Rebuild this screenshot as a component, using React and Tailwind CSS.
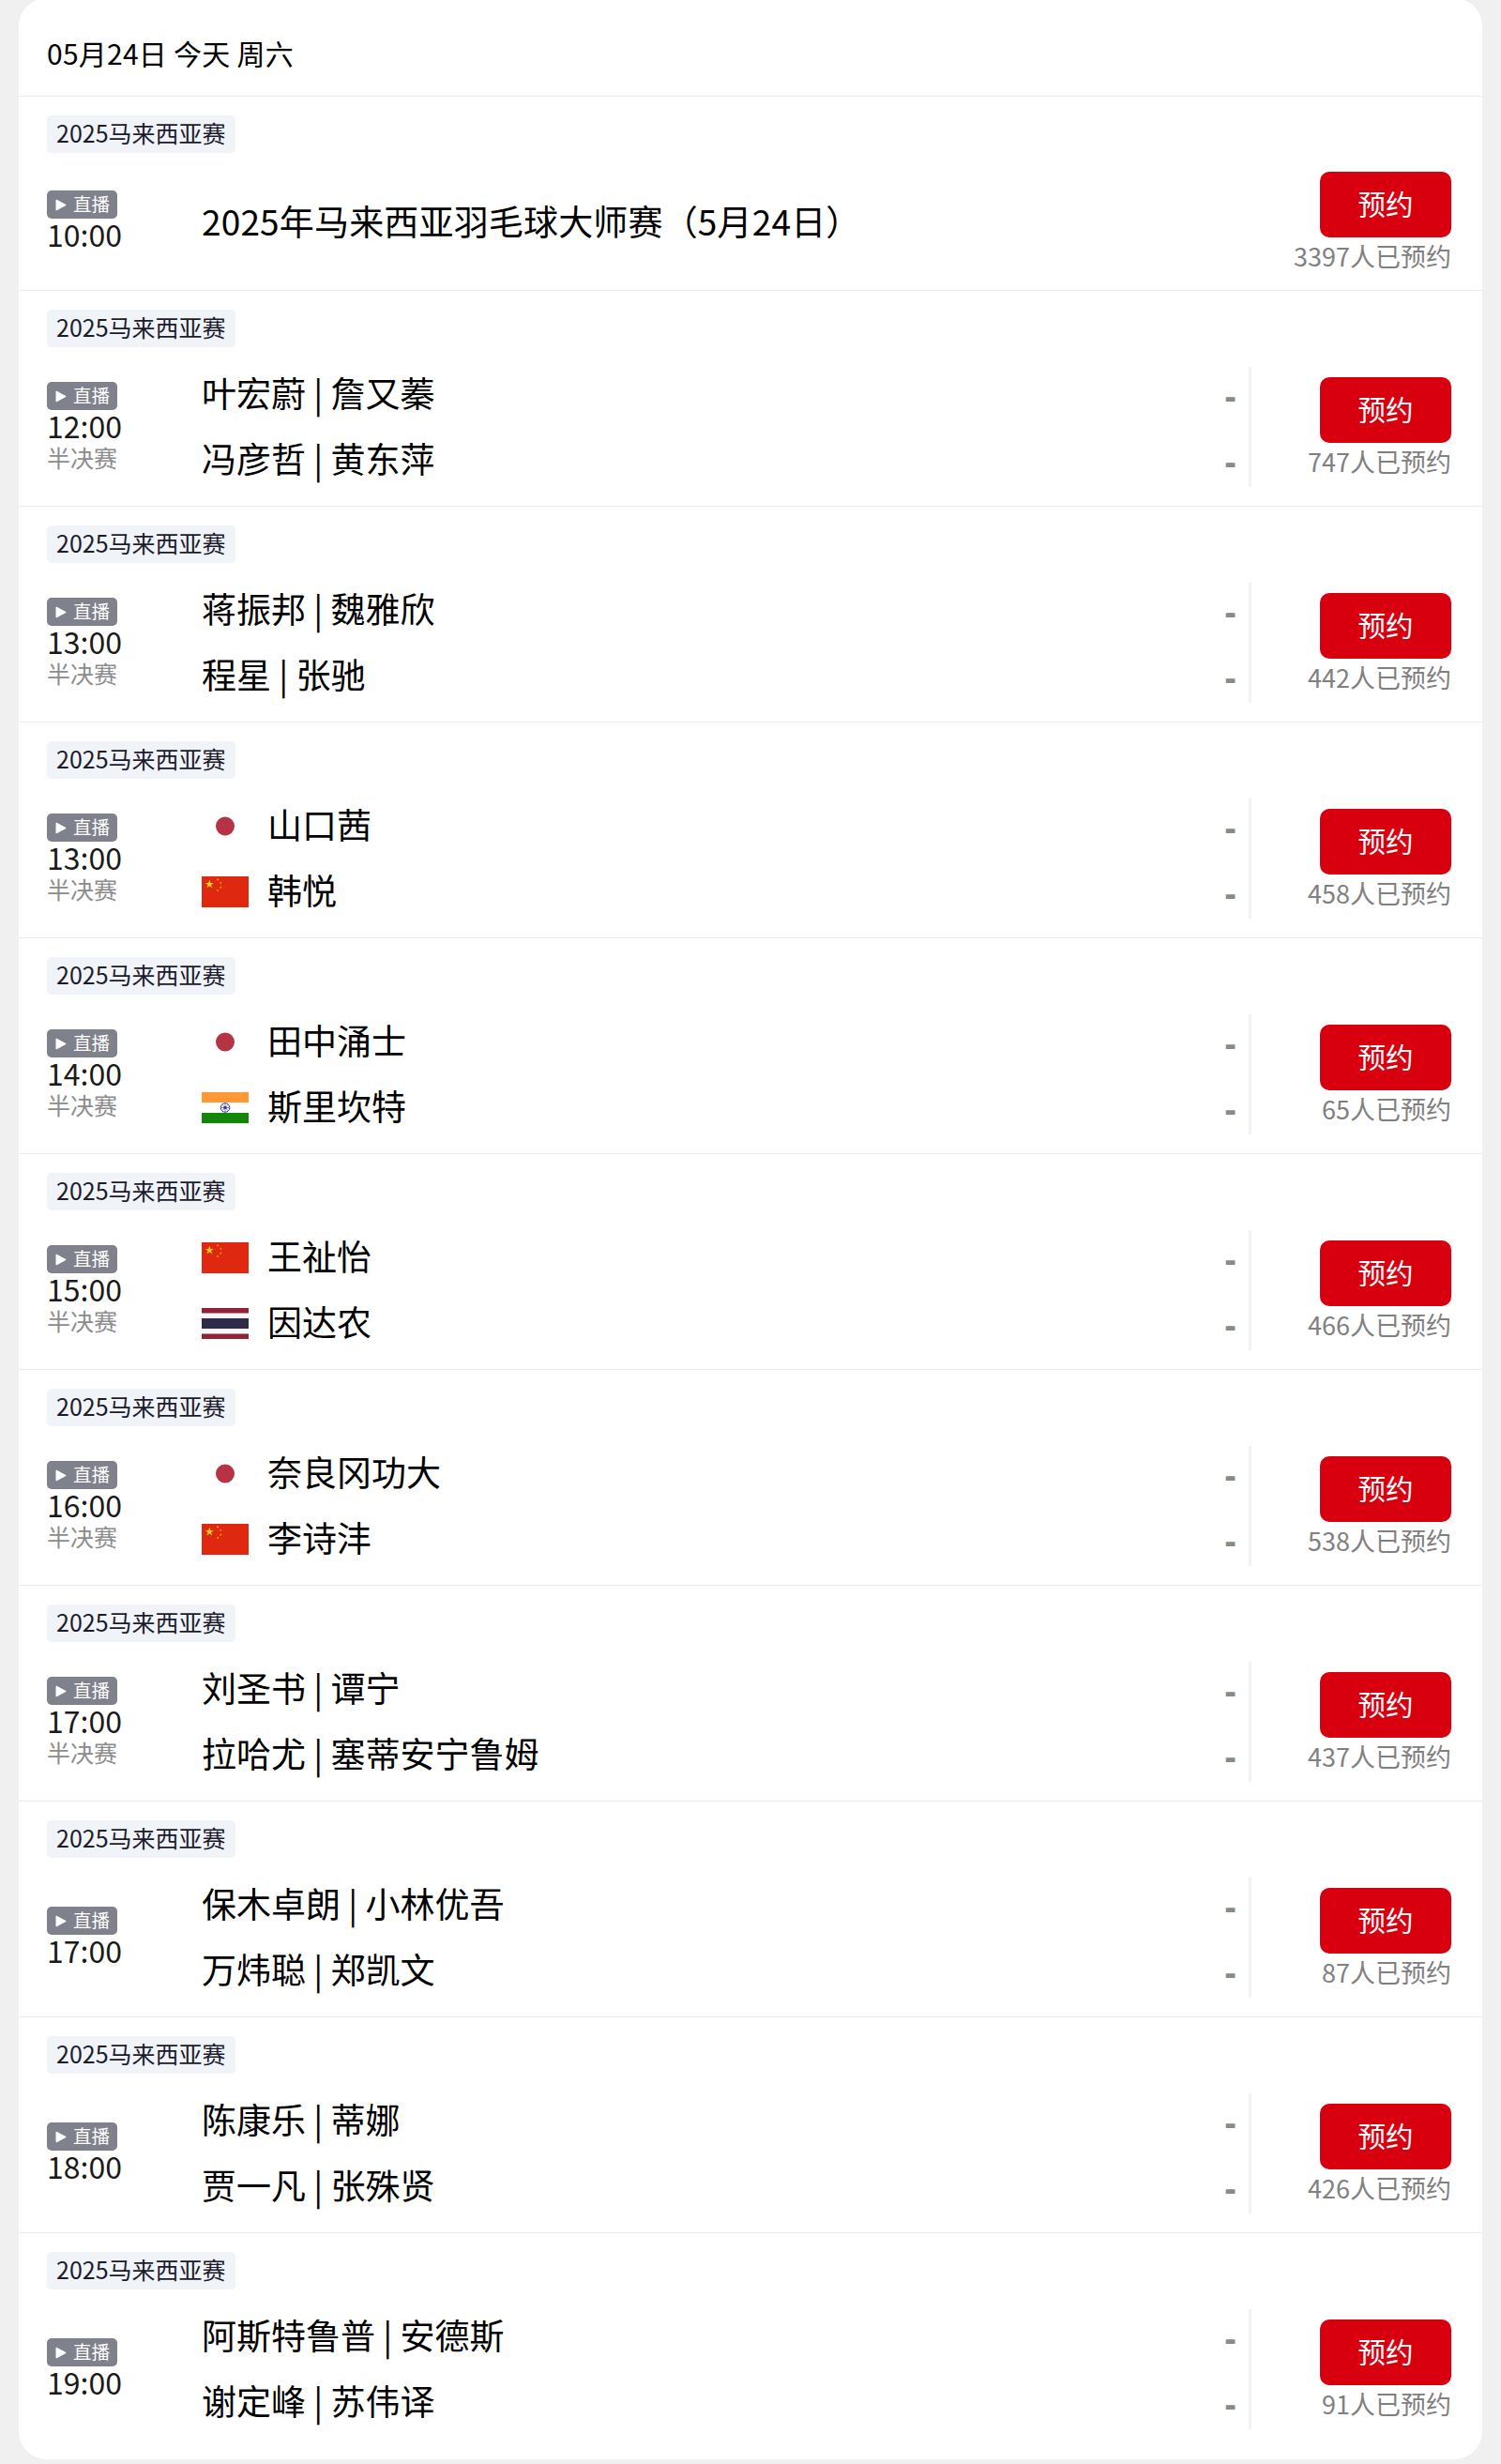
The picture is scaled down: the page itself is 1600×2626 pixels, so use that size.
import React from "react";

const TAG = "2025马来西亚赛";

const matches = [
  {
    time: "10:00",
    title: "2025年马来西亚羽毛球大师赛（5月24日）",
    booked: 3397,
  },
  {
    time: "12:00",
    stage: "半决赛",
    teams: [{ name: "叶宏蔚 | 詹又蓁" }, { name: "冯彦哲 | 黄东萍" }],
    booked: 747,
  },
  {
    time: "13:00",
    stage: "半决赛",
    teams: [{ name: "蒋振邦 | 魏雅欣" }, { name: "程星 | 张驰" }],
    booked: 442,
  },
  {
    time: "13:00",
    stage: "半决赛",
    teams: [
      { name: "山口茜", flag: "jp" },
      { name: "韩悦", flag: "cn" },
    ],
    booked: 458,
  },
  {
    time: "14:00",
    stage: "半决赛",
    teams: [
      { name: "田中涌士", flag: "jp" },
      { name: "斯里坎特", flag: "in" },
    ],
    booked: 65,
  },
  {
    time: "15:00",
    stage: "半决赛",
    teams: [
      { name: "王祉怡", flag: "cn" },
      { name: "因达农", flag: "th" },
    ],
    booked: 466,
  },
  {
    time: "16:00",
    stage: "半决赛",
    teams: [
      { name: "奈良冈功大", flag: "jp" },
      { name: "李诗沣", flag: "cn" },
    ],
    booked: 538,
  },
  {
    time: "17:00",
    stage: "半决赛",
    teams: [{ name: "刘圣书 | 谭宁" }, { name: "拉哈尤 | 塞蒂安宁鲁姆" }],
    booked: 437,
  },
  {
    time: "17:00",
    teams: [{ name: "保木卓朗 | 小林优吾" }, { name: "万炜聪 | 郑凯文" }],
    booked: 87,
  },
  {
    time: "18:00",
    teams: [{ name: "陈康乐 | 蒂娜" }, { name: "贾一凡 | 张殊贤" }],
    booked: 426,
  },
  {
    time: "19:00",
    teams: [{ name: "阿斯特鲁普 | 安德斯" }, { name: "谢定峰 | 苏伟译" }],
    booked: 91,
  },
];

const STAR = "0,-1 0.225,-0.309 0.951,-0.309 0.363,0.118 0.588,0.809 0,0.382 -0.588,0.809 -0.363,0.118 -0.951,-0.309 -0.225,-0.309";

const Flag = ({ code }) => (
  <svg className="mr-5 h-[33px] w-[50px] shrink-0" viewBox="0 0 50 33">
    {code === "jp" && (
      <>
        <rect width="50" height="33" fill="#fff" />
        <circle cx="25" cy="16.5" r="10" fill="#b53344" />
      </>
    )}
    {code === "cn" && (
      <>
        <rect width="50" height="33" fill="#de2910" />
        <g fill="#ffd21f">
          <polygon points={STAR} transform="translate(8.3 8.5) scale(4.8)" />
          <g fillOpacity="0.85">
            <polygon points={STAR} transform="translate(17 3.4) rotate(23) scale(1.5)" />
            <polygon points={STAR} transform="translate(20.3 6.8) rotate(45) scale(1.5)" />
            <polygon points={STAR} transform="translate(20.3 11.6) scale(1.5)" />
            <polygon points={STAR} transform="translate(17 15) rotate(20) scale(1.5)" />
          </g>
        </g>
      </>
    )}
    {code === "in" && (
      <>
        <rect width="50" height="33" fill="#fff" />
        <rect width="50" height="11" fill="#ff9933" />
        <rect y="22" width="50" height="11" fill="#138808" />
        <circle cx="25" cy="16.5" r="4.8" fill="none" stroke="#3c3c94" strokeWidth="1" />
        <circle cx="25" cy="16.5" r="1.7" fill="#2a2a85" />
        <g stroke="#3c3c94" strokeWidth="0.6">
          <path d="M20.5 16.5h9M25 12v9M21.8 13.3l6.4 6.4M28.2 13.3l-6.4 6.4" />
        </g>
      </>
    )}
    {code === "th" && (
      <>
        <rect width="50" height="33" fill="#f4f5f8" />
        <rect width="50" height="5.5" fill="#8f2338" />
        <rect y="11" width="50" height="11" fill="#2d2a4a" />
        <rect y="27.5" width="50" height="5.5" fill="#8f2338" />
      </>
    )}
  </svg>
);

const LiveBadge = () => (
  <div className="flex h-[30px] w-[75px] items-center rounded-[5px] bg-[#7f818c] pl-[9px] text-white">
    <svg className="h-[13px] w-3" viewBox="0 0 12 13">
      <path
        d="M1 1v11L11.2 6.5z"
        fill="currentColor"
        stroke="currentColor"
        strokeWidth="1"
        strokeLinejoin="round"
      />
    </svg>
    <span className="ml-[7px] pb-0.5 text-[19.5px] leading-7">直播</span>
  </div>
);

const MatchRow = ({ match }) => (
  <div className="border-t border-[#ebebeb] pt-5 pr-[33px] pl-[30px]">
    <div className="h-10 w-[201px] rounded-[5px] bg-[#f0f3f8] px-2.5 text-[25px] leading-[37px] whitespace-nowrap text-[#1b1b2c]">
      {TAG}
    </div>
    <div
      className={
        match.teams
          ? "mt-5 mb-[19px] flex h-[130px] items-center"
          : "mt-5 mb-5 flex h-[106px] items-center"
      }
    >
      <div className="w-[165px] shrink-0">
        <LiveBadge />
        <div className="pb-[3px] text-[32px] leading-[33px] text-[#1a1a1a]">
          {match.time}
        </div>
        {match.stage && (
          <div className="pb-px text-[25px] leading-[29px] text-[#8c8c8c]">
            {match.stage}
          </div>
        )}
      </div>

      {match.title && (
        <div className="flex-1 pb-[3px] text-[37px] leading-[60px] tracking-[0.17px]">
          {match.title}
        </div>
      )}

      {match.teams && (
        <div className="flex flex-1 flex-col gap-2.5">
          {match.teams.map((team) => (
            <div key={team.name} className="flex h-[60px] items-center">
              {team.flag && <Flag code={team.flag} />}
              <span className="flex-1 pb-[3px] text-[37px] leading-[57px]">
                {team.name}
              </span>
              <span className="mr-[13px] pt-1.5 font-['Liberation_Sans',sans-serif] text-[38px] leading-[54px] font-bold text-[#8a8a8a]">
                -
              </span>
            </div>
          ))}
        </div>
      )}

      {match.teams && <div className="h-32 w-[3px] bg-[#f2f2f2]" />}

      <div className="flex w-[213px] shrink-0 flex-col items-end">
        <button className="h-[70px] w-[140px] rounded-[10px] bg-[#d8000f] pb-1 text-[29.5px] leading-[66px] text-white">
          预约
        </button>
        <div className="pt-1 text-[27px] leading-8 whitespace-nowrap text-[#808080]">
          {match.booked}人已预约
        </div>
      </div>
    </div>
  </div>
);

const App = () => {
  return (
    <div className="h-[2626px] overflow-hidden bg-[#f0f0f0] px-5 font-['Noto_Sans_CJK_SC',sans-serif] text-black">
      <div className="-mt-0.5 h-[2623px] rounded-[30px] bg-white">
        <div className="flex h-[104px] items-center px-[30px] pt-[13px] text-[30px] tracking-[0.25px]">
          05月24日 今天 周六
        </div>
        {matches.map((match, index) => (
          <MatchRow key={index} match={match} />
        ))}
      </div>
    </div>
  );
};

export default App;
